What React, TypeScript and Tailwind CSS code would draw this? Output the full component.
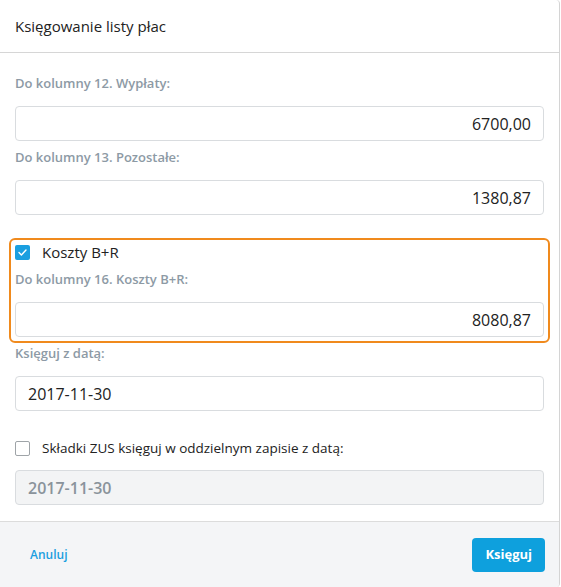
import React from 'react';

const font = { fontFamily: '"Open Sans", "Noto Sans", sans-serif' };

const Label: React.FC<{ children: React.ReactNode }> = ({ children }) => (
    <div className="h-[20px] leading-[20px] text-[13px] font-semibold text-[#8d9aa5] mb-[13px]">{children}</div>
);

const Field: React.FC<{ value: string; align?: 'left' | 'right'; disabled?: boolean }> = ({
    value,
    align = 'right',
    disabled,
}) => (
    <div
        className={
            'h-[35px] rounded-[4px] border border-[#d9dcdf] px-[12px] flex items-center text-[16px] ' +
            (align === 'right' ? 'justify-end ' : 'justify-start ') +
            (disabled ? 'bg-[#f3f4f5] text-[#8a939b] font-semibold' : 'bg-white text-[#222]')
        }
    >
        {value}
    </div>
);

const Check: React.FC<{ checked?: boolean }> = ({ checked }) =>
    checked ? (
        <div className="w-[15px] h-[15px] rounded-[2px] bg-[#1a9fe0] flex items-center justify-center">
            <svg width="9" height="7" viewBox="0 0 9 7" fill="none">
                <path d="M1 3.6 L3.4 6 L8 1" stroke="white" strokeWidth="1.4" strokeLinecap="round" strokeLinejoin="round" />
            </svg>
        </div>
    ) : (
        <div className="w-[15px] h-[15px] rounded-[2px] border border-[#9fa4a8] bg-white" />
    );

export default function App() {
    return (
        <div className="w-[561px] h-[587px] bg-white" style={font}>
            <div className="w-[560px] h-[587px] flex flex-col border-r border-[#d4d4d4] rounded-r-[4px] overflow-hidden">
                <div className="h-[53px] shrink-0 border-b border-[#d6d6d6] px-[15px] flex items-center text-[15px] text-[#222]">
                    Księgowanie listy płac
                </div>

                <div className="flex-1 px-[15px] pt-[20px]">
                    <Label>Do kolumny 12. Wypłaty:</Label>
                    <Field value="6700,00" />
                    <div className="mt-[6px]">
                        <Label>Do kolumny 13. Pozostałe:</Label>
                        <Field value="1380,87" />
                    </div>

                    <div className="mt-[23px] -mx-[6px] border-2 border-[#f08a1d] rounded-[6px] px-[4px] pt-[5px] pb-[4px]">
                        <div className="flex items-center gap-[12px] h-[15px] text-[15px] text-[#222]">
                            <Check checked />
                            <span>Koszty B+R</span>
                        </div>
                        <div className="mt-[9px]">
                            <Label>Do kolumny 16. Koszty B+R:</Label>
                            <Field value="8080,87" />
                        </div>
                    </div>

                    <div className="mt-0">
                        <Label>Księguj z datą:</Label>
                        <Field value="2017-11-30" align="left" />
                    </div>

                    <div className="mt-[30px] flex items-center gap-[12px] h-[15px] text-[13.5px] text-[#222]">
                        <Check />
                        <span>Składki ZUS księguj w oddzielnym zapisie z datą:</span>
                    </div>
                    <div className="mt-[14px]">
                        <Field value="2017-11-30" align="left" disabled />
                    </div>
                </div>

                <div className="h-[66px] shrink-0 border-t border-[#dcdcdc] bg-[#f4f5f7] pl-[15px] pr-[14px] flex items-center justify-between">
                    <span className="ml-[15px] text-[12px] font-semibold text-[#1a9fe0]">Anuluj</span>
                    <button className="h-[34px] px-[13px] rounded-[4px] bg-[#0ea0dd] text-white text-[13px] font-bold">
                        Księguj
                    </button>
                </div>
            </div>
        </div>
    );
}
